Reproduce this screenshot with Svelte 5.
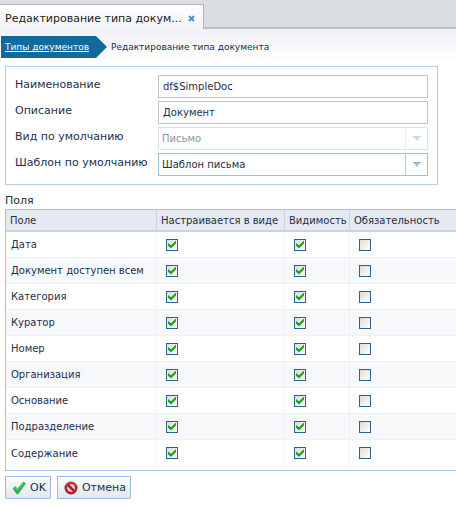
<script>
  let name = $state('df$SimpleDoc');
  let description = $state('Документ');
  let rows = $state(
    ['Дата', 'Документ доступен всем', 'Категория', 'Куратор', 'Номер', 'Организация', 'Основание', 'Подразделение', 'Содержание'].map(
      (label) => ({ label, inView: true, visible: true, required: false })
    )
  );
</script>

<div class="page">
  <div class="tabs">
    <div class="tab">
      <span>Редактирование типа докум...</span>
      <button class="close" aria-label="Закрыть">
        <svg width="7" height="7" viewBox="0 0 7 7"><path d="M1 1L6 6M6 1L1 6" stroke="#4a8fc9" stroke-width="2" /></svg>
      </button>
    </div>
  </div>

  <main>
    <nav>
      <a class="crumb" href="#types">Типы документов</a>
      <svg class="point" width="11" height="22" viewBox="0 0 11 22"><path d="M0 0L11 11L0 22Z" fill="#116a9c" /></svg>
      <span class="current">Редактирование типа документа</span>
    </nav>

    <form class="panel" onsubmit={(e) => e.preventDefault()}>
      <label for="name">Наименование</label>
      <input id="name" class="text" type="text" bind:value={name} />
      <label for="description">Описание</label>
      <input id="description" class="text" type="text" bind:value={description} />
      <label for="view">Вид по умолчанию</label>
      <div class="combo disabled">
        <select id="view" disabled><option>Письмо</option></select>
        <span class="arrow"><svg width="8" height="5" viewBox="0 0 8 5"><path d="M0 0H8L4 5Z" fill="#a5c5e5" /><path d="M0 0H8V1H0Z" fill="#b0b5be" /></svg></span>
      </div>
      <label for="template">Шаблон по умолчанию</label>
      <div class="combo">
        <select id="template"><option>Шаблон письма</option></select>
        <span class="arrow"><svg width="8" height="5" viewBox="0 0 8 5"><path d="M0 0H8L4 5Z" fill="#9fc2e4" /><path d="M0 0H8V1H0Z" fill="#a2a8b2" /></svg></span>
      </div>
    </form>

    <h2>Поля</h2>
    <div class="grid">
      <table>
        <colgroup><col class="c1" /><col class="c2" /><col class="c3" /><col /></colgroup>
        <thead>
          <tr><th>Поле</th><th>Настраивается в виде</th><th>Видимость</th><th>Обязательность</th></tr>
        </thead>
        <tbody>
          {#each rows as row}
            <tr>
              <td>{row.label}</td>
              <td><input type="checkbox" aria-label="{row.label}: настраивается в виде" bind:checked={row.inView} /></td>
              <td><input type="checkbox" aria-label="{row.label}: видимость" bind:checked={row.visible} /></td>
              <td><input type="checkbox" aria-label="{row.label}: обязательность" bind:checked={row.required} /></td>
            </tr>
          {/each}
        </tbody>
      </table>
    </div>

    <div class="actions">
      <button class="btn">
        <svg width="14" height="14" viewBox="0 0 14 14">
          <path d="M1 7.5L3.5 5.5L5.5 8L11.5 1L13.5 2.5L6 13H5Z" fill="#2fb344" stroke="#2a9a3c" stroke-width=".6" />
          <path d="M2.2 7.5L3.4 6.5L5.5 9.2L11.6 2.2" fill="none" stroke="#6fdc7c" stroke-width=".9" />
        </svg>
        <span>OK</span>
      </button>
      <button class="btn">
        <svg width="14" height="14" viewBox="0 0 14 14">
          <circle cx="7" cy="7" r="5.2" fill="#e9d9dc" stroke="#b3202c" stroke-width="2.6" />
          <path d="M3.5 3.5L10.5 10.5" stroke="#b3202c" stroke-width="2.6" />
          <path d="M2 5A5.4 5.4 0 0 1 11 3.2" fill="none" stroke="#db5a60" stroke-width=".8" />
        </svg>
        <span>Отмена</span>
      </button>
    </div>
  </main>
</div>

<style>
  :global(body) {
    margin: 0;
    background: #fff;
  }
  .page {
    font-family: 'DejaVu Sans', Verdana, sans-serif;
    font-size: 11px;
    color: #1c2f4a;
    overflow: hidden;
  }
  button,
  input,
  select {
    font: inherit;
    color: inherit;
    margin: 0;
    box-sizing: border-box;
  }
  .tabs {
    display: flex;
    align-items: flex-end;
    height: 29px;
    box-sizing: border-box;
    padding-top: 4px;
    background: linear-gradient(#dadde2 27px, #bbbec3 27px);
  }
  .tab {
    display: flex;
    align-items: center;
    gap: 6px;
    height: 25px;
    box-sizing: border-box;
    padding: 2px 8px 0 5px;
    border-top: 1px solid #b4b6ba;
    border-right: 1px solid #b4b6ba;
    background: linear-gradient(#fff, #f3f4f9);
    color: #222;
    white-space: nowrap;
  }
  .close {
    display: flex;
    padding: 0;
    border: 0;
    background: none;
  }
  main {
    padding: 7px 0 0 5px;
    background: linear-gradient(#f0f0f7, #fff 32px);
  }
  nav {
    display: flex;
    align-items: center;
    height: 22px;
    margin: 0 0 8px -4px;
    font-size: 9px;
  }
  .crumb {
    height: 22px;
    line-height: 22px;
    padding: 0 7px 0 4px;
    background: #116a9c;
    color: #fff;
    white-space: nowrap;
  }
  .current {
    margin-left: 4px;
    line-height: 24px;
    white-space: nowrap;
  }
  .panel {
    display: grid;
    grid-template-columns: 143px 1fr;
    row-gap: 3px;
    margin-right: 18px;
    padding: 8px 9px;
    border: 1px solid #b4d0ea;
    background: #fff;
  }
  .panel label {
    line-height: 20px;
    white-space: nowrap;
  }
  .text,
  .combo {
    height: 23px;
    width: 100%;
    font-size: 10px;
    box-sizing: border-box;
    background: #fff;
  }
  .text {
    padding: 0 4px;
    border: 1px solid #c4c4c4;
    border-radius: 0;
  }
  .combo {
    display: flex;
    border: 1px solid #9fc0dc;
  }
  .combo select {
    flex: 1;
    min-width: 0;
    height: 21px;
    padding: 0 3px;
    border: 0;
    appearance: none;
    background: none;
    opacity: 1;
  }
  .arrow {
    display: flex;
    align-items: center;
    justify-content: center;
    width: 21px;
    border-left: 1px solid #b4d0ea;
  }
  .disabled {
    border-color: #d3e3f3;
    color: #8c929c;
  }
  .disabled .arrow {
    border-color: #d3e3f3;
    opacity: 0.6;
  }
  h2 {
    margin: 8px 0 0;
    font-size: 11px;
    font-weight: normal;
    line-height: 16px;
  }
  .grid {
    padding-bottom: 4px;
    border: 1px solid #a9c3dc;
    border-right: 0;
  }
  table {
    width: 100%;
    table-layout: fixed;
    border-collapse: separate;
    border-spacing: 0;
    font-size: 10px;
  }
  .c1 {
    width: 151px;
  }
  .c2 {
    width: 128px;
  }
  .c3 {
    width: 65px;
  }
  th,
  td {
    box-sizing: border-box;
    padding: 0 5px;
    text-align: left;
    font-weight: normal;
    white-space: nowrap;
  }
  th {
    height: 22px;
    padding: 0 4px;
    background: #e6e9ef;
    border-right: 1px solid #c6d6e8;
    border-bottom: 2px solid #c2d6ea;
  }
  td {
    height: 26px;
    border-right: 1px solid #edf2f8;
    border-bottom: 1px solid #edf2f7;
  }
  tr:nth-child(even) td {
    background: #f6f8fa;
  }
  th:last-child,
  td:last-child {
    border-right: 0;
  }
  tr:last-child td {
    border-bottom: 0;
  }
  td input {
    display: block;
    width: 12px;
    height: 12px;
    margin-left: 4px;
    appearance: none;
    border: 1px solid #2a6496;
    background: linear-gradient(135deg, #dedcd6, #fff);
  }
  td input:checked::before {
    content: '';
    display: block;
    width: 8px;
    height: 8px;
    margin: 1px;
    background: #1ea31e;
    clip-path: polygon(0 30%, 38% 60%, 100% 0, 100% 38%, 38% 100%, 0 65%);
  }
  .actions {
    display: flex;
    gap: 6px;
    padding-top: 5px;
  }
  .btn {
    display: flex;
    align-items: center;
    gap: 4px;
    height: 23px;
    padding: 0 4px 0 6px;
    border: 1px solid #9fb9d6;
    background: linear-gradient(#fbfcfd, #e3e8ef);
  }
</style>
